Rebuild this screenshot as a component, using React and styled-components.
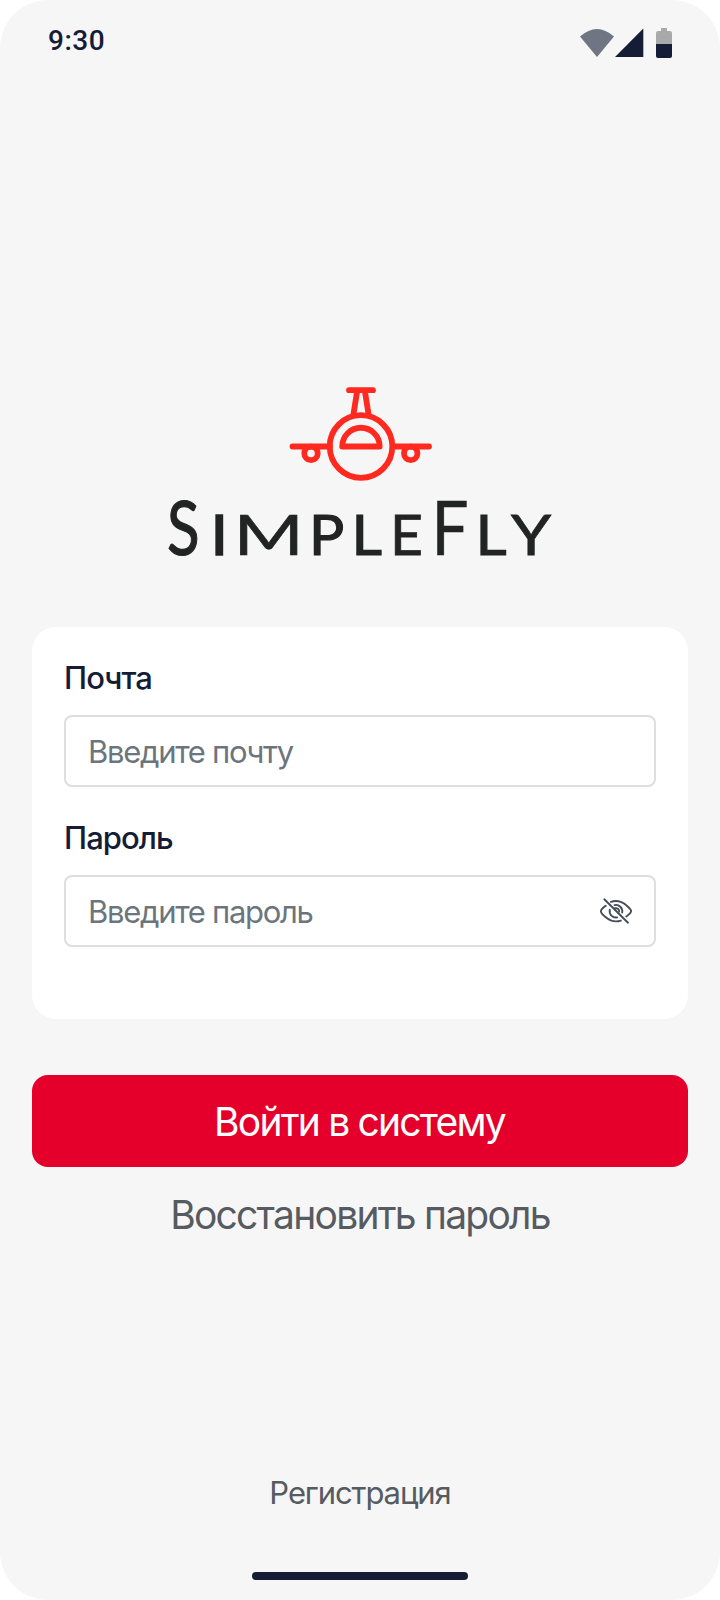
import React from "react";
import styled, { createGlobalStyle } from "styled-components";

const GlobalStyle = createGlobalStyle`
  *, *::before, *::after { box-sizing: border-box; }
  body { margin: 0; background: #fff; }
  button, input { font: inherit; letter-spacing: inherit; }
`;

const Screen = styled.main`
  display: flex;
  flex-direction: column;
  width: 720px;
  height: 1600px;
  padding: 0 32px;
  border-radius: 48px;
  background: #f6f6f6;
  color: #141c36;
  font-family: Inter, "Liberation Sans", sans-serif;
`;

const StatusBar = styled.header`
  display: flex;
  justify-content: space-between;
  height: 80px;
  padding: 0 16px;
`;

const Clock = styled.time`
  padding-top: 25px;
  font: 500 28px/32px Roboto, sans-serif;
  letter-spacing: 0.5px;
`;

const StatusIcons = styled.svg`
  width: 92px;
  height: 30px;
  margin-top: 28px;
`;

const Brand = styled.svg`
  align-self: center;
  width: 400px;
  height: 180px;
  margin-top: 300px;
  overflow: visible;
`;

const Letter = styled.text`
  font-family: Lato, sans-serif;
  font-weight: 400;
  font-size: ${({ $size }) => $size}px;
  fill: #222423;
  stroke: #222423;
  stroke-width: ${({ $stroke }) => $stroke}px;
`;

const Form = styled.form`
  display: flex;
  flex-direction: column;
  margin-top: 67px;
`;

const Card = styled.section`
  display: flex;
  flex-direction: column;
  gap: 32px;
  height: 392px;
  padding: 32px;
  border-radius: 24px;
  background: #fff;
`;

const Field = styled.label`
  display: flex;
  flex-direction: column;
  gap: 16px;
`;

const FieldLabel = styled.span`
  height: 40px;
  font-size: 31px;
  font-weight: 500;
  line-height: 38px;
  letter-spacing: -0.95px;
`;

const InputBox = styled.span`
  display: flex;
  align-items: center;
  justify-content: space-between;
  width: 592px;
  height: 72px;
  padding: 0 22px;
  border: 2px solid #dedede;
  border-radius: 8px;
`;

const Input = styled.input`
  flex: 1;
  min-width: 0;
  height: 62px;
  padding: 0;
  border: 0;
  outline: 0;
  background: transparent;
  color: #141c36;
  font-size: 31px;
  letter-spacing: -1.3px;
  &::placeholder { color: #6c757d; opacity: 1; }
`;

const EyeIcon = styled.svg`
  flex: none;
  width: 32px;
  height: 28px;
`;

const SubmitButton = styled.button`
  height: 92px;
  margin-top: 56px;
  padding: 0 1px 0 0;
  border: 0;
  border-radius: 16px;
  background: #e4002b;
  color: #fff;
  font-size: 39px;
  letter-spacing: -1.78px;
`;

const TextButton = styled.button`
  align-self: center;
  height: 48px;
  margin-top: ${({ $top }) => $top}px;
  padding: 0;
  border: 0;
  background: none;
  color: #565b61;
  font-size: ${({ $size }) => $size}px;
  line-height: 48px;
  letter-spacing: ${({ $tracking }) => $tracking}px;
  white-space: nowrap;
`;

const HomeIndicator = styled.div`
  align-self: center;
  width: 216px;
  height: 8px;
  margin: auto 0 20px;
  border-radius: 4px;
  background: #141c36;
`;

function DeviceStatus() {
  return (
    <StatusIcons viewBox="580 28 92 30" aria-hidden="true">
      <path d="M580 36.5Q597 21.5 614 36.5L597 57Z" fill="#707583" />
      <path d="M615 57 643.3 28.5V57Z" fill="#141c36" />
      <path d="M661 28h6v3h3q2 0 2 2v11h-16V33q0-2 2-2h3Z" fill="#a9a9a9" />
      <path d="M656 44h16v12q0 2-2 2h-12q-2 0-2-2Z" fill="#141c36" />
    </StatusIcons>
  );
}

const LETTERS = [
  { char: "S", x: 167, size: 76, stretch: 0.79, stroke: 1.2 },
  { char: "I", x: 210.5, size: 57, stretch: 1.1, stroke: 1.6 },
  { char: "M", x: 233.5, size: 57, stretch: 1.33, stroke: 0.6 },
  { char: "P", x: 309, size: 57, stretch: 1.03, stroke: 1.2 },
  { char: "L", x: 351.5, size: 57, stretch: 1.04, stroke: 1.2 },
  { char: "E", x: 390, size: 57, stretch: 1, stroke: 0.8 },
  { char: "F", x: 431.5, size: 76, stretch: 0.86, stroke: 0.6 },
  { char: "L", x: 475.5, size: 57, stretch: 1.06, stroke: 1.2 },
  { char: "Y", x: 511, size: 57, stretch: 1.13, stroke: 0.8 },
];

function Logo() {
  return (
    <Brand viewBox="160 380 400 180" role="img" aria-label="SimpleFly">
      <g fill="none" stroke="#ff291f" strokeWidth="5.8" strokeLinecap="round" strokeLinejoin="round">
        <path d="M349 390.2h24M357 392l-3.5 22M365 392l3.5 22M292.5 446.5H330M395 446.5h34" />
        <circle cx="361" cy="446.5" r="31.3" />
        <path d="M342.2 446.5h37.5a18.75 18.75 0 0 0-37.5 0Z" />
        <circle cx="311" cy="453.4" r="6.7" />
        <circle cx="410.7" cy="453.4" r="6.7" />
      </g>
      {LETTERS.map(({ char, x, size, stretch, stroke }) => (
        <Letter key={x} $size={size} $stroke={stroke} transform={`translate(${x} 555) scale(${stretch} 1)`}>
          {char}
        </Letter>
      ))}
    </Brand>
  );
}

function HiddenIcon() {
  return (
    <EyeIcon viewBox="600 897 32 28" fill="none" stroke="#454d57" strokeWidth="1.9" strokeLinecap="round" aria-hidden="true">
      <path d="M604.3 899.3 628 922.7" />
      <path d="M605.7 905.7C602.5 908 600.9 910.2 600.9 911.2 600.9 913 608 921.4 616 921.4q2.5 0 4.8-.8" />
      <path d="M611 901.9q2.4-.9 5-.9c8 0 15.1 8.4 15.1 10.1 0 1-1.6 3.2-4.8 5.4" />
      <path d="M609.8 909.7a6.4 6.4 0 0 0 7.4 7.7M614.5 905.1a6.4 6.4 0 0 1 7.7 7.4M615 908.3q3.8-.6 4.2 3.2" />
    </EyeIcon>
  );
}

export default function App() {
  return (
    <>
      <GlobalStyle />
      <Screen>
        <StatusBar>
          <Clock>9:30</Clock>
          <DeviceStatus />
        </StatusBar>
        <Logo />
        <Form onSubmit={(event) => event.preventDefault()}>
          <Card>
            <Field>
              <FieldLabel>Почта</FieldLabel>
              <InputBox>
                <Input type="email" placeholder="Введите почту" />
              </InputBox>
            </Field>
            <Field>
              <FieldLabel>Пароль</FieldLabel>
              <InputBox>
                <Input type="password" placeholder="Введите пароль" />
                <HiddenIcon />
              </InputBox>
            </Field>
          </Card>
          <SubmitButton type="submit">Войти в систему</SubmitButton>
          <TextButton type="button" $top={24} $size={39} $tracking={-1.75}>Восстановить пароль</TextButton>
        </Form>
        <TextButton type="button" $top={230} $size={31} $tracking={-1.1}>Регистрация</TextButton>
        <HomeIndicator />
      </Screen>
    </>
  );
}
